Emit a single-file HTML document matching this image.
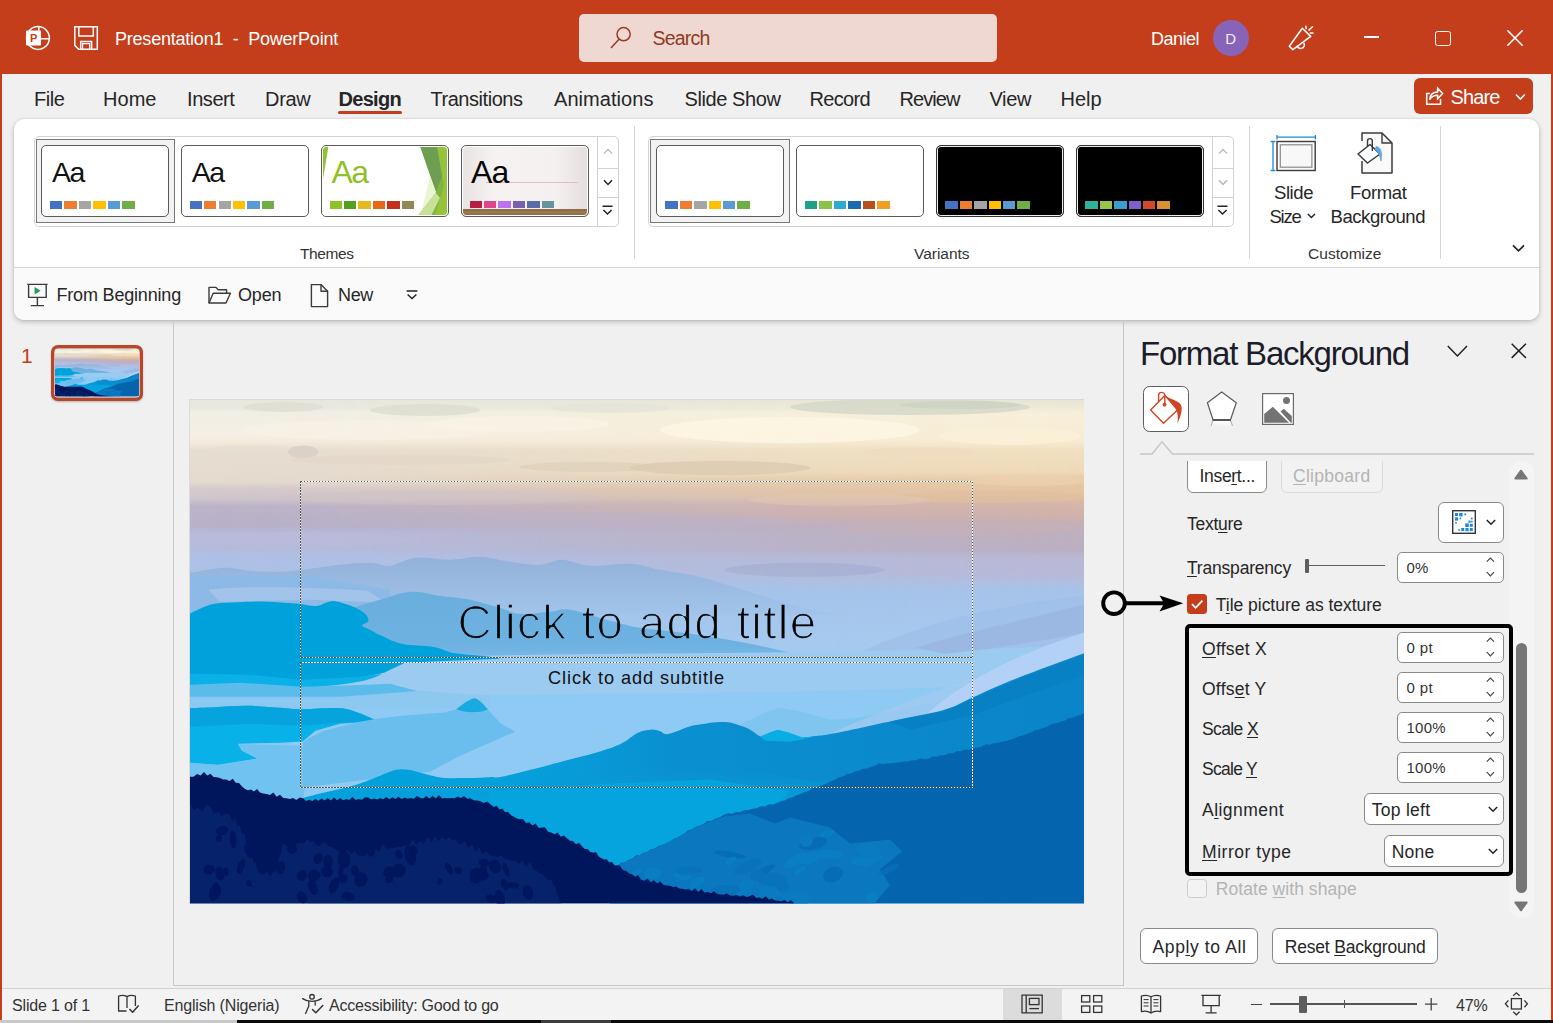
<!DOCTYPE html>
<html lang="en"><head><meta charset="utf-8"><title>Presentation1 - PowerPoint</title>
<style>
*{box-sizing:border-box;margin:0;padding:0}
html,body{width:1553px;height:1023px;overflow:hidden;background:#f0f0f0}
body{font-family:"Liberation Sans",sans-serif;color:#262626;position:relative}
#app{position:absolute;left:0;top:0;width:1553px;height:1023px;overflow:hidden;background:#f0f0f0}
.a{position:absolute}
.t{position:absolute;white-space:nowrap;line-height:1;color:#262626}
u{text-decoration:underline;text-underline-offset:2px;text-decoration-thickness:1px}
svg{position:absolute;overflow:visible}
.box{position:absolute;background:#fff;border:1px solid #8a8a8a;border-radius:5px}
.thumb{position:absolute;top:145px;width:128px;height:72px;border:1px solid #5a5a5a;border-radius:5px;background:#fff;overflow:hidden}
.sw{position:absolute;top:55.2px;height:7.5px;width:12.4px}
</style></head><body><div id="app">

<!-- ============ TITLE BAR ============ -->
<div class="a" id="titlebar" style="left:0;top:0;width:1553px;height:74px;background:#c43e1c"></div>
<div class="a" style="left:0;top:0;width:2px;height:1020px;background:#c43e1c"></div>
<div class="a" style="left:1551px;top:0;width:2px;height:1020px;background:#c43e1c"></div>

<svg style="left:24px;top:24px" width="28" height="28" viewBox="24 24 28 28" fill="none" stroke="#fff" stroke-width="1.5">
<circle cx="38" cy="38" r="11.4"></circle><path d="M38.8 26.5V31M41 38.8H49.5"></path>
<rect x="26" y="30.4" width="15" height="15" rx="1.2" fill="#fff" stroke="none"></rect>
</svg>
<span class="t" style="left:30px;top:33.29px;font-size:11px;color:#c43e1c;font-weight:bold">P</span>
<svg style="left:73px;top:25px" width="26" height="26" viewBox="73 25 26 26" fill="none" stroke="#fff" stroke-width="1.5">
<path d="M74.8 26.7H97.3V49.2H78.6L74.8 45.4Z"></path><path d="M78.8 26.7V36H93.3V26.7"></path><path d="M80.7 49.2V41.6H91.6V49.2"></path><path d="M82.6 49V43.6H89.7V49" stroke-width="1.2"></path>
</svg>
<span class="t" style="left: 115px; top: 29.76px; font-size: 18px; color: rgb(255, 255, 255); white-space: pre; letter-spacing: -0.219px;">Presentation1  -  PowerPoint</span>
<div class="a" style="left:579px;top:14px;width:418px;height:48px;background:#f0d8d2;border-radius:5px"></div>
<svg style="left:608px;top:24px" width="26" height="28" viewBox="608 24 26 28" fill="none" stroke="#9a3a22" stroke-width="1.5"><circle cx="623.6" cy="34.2" r="6.6"></circle><path d="M619 39.2L611 48"></path></svg>
<span class="t" style="left: 652.5px; top: 29.49px; font-size: 19.5px; color: rgb(143, 58, 36); letter-spacing: -0.799px;">Search</span>
<span class="t" style="left: 1151px; top: 29.76px; font-size: 18px; color: rgb(255, 255, 255); letter-spacing: -0.505px;">Daniel</span>
<div class="a" style="left:1213px;top:20px;width:36px;height:36px;border-radius:50%;background:#8764b8"></div>
<span class="t" style="left:1225.3px;top:30.80px;font-size:15px;color:#f3ecfb">D</span>
<svg style="left:1286px;top:24px" width="30" height="28" viewBox="1286 24 30 28" fill="none" stroke="#fff" stroke-width="1.5" stroke-linecap="round" stroke-linejoin="round">
<path d="M1289.3 46.2L1302.3 28.2L1310.7 36.4L1292.8 49.6Z"></path><path d="M1297.4 46.4a3.4 3.4 0 0 0 6.600-3"></path><path d="M1305.800 26.200l.4 2.400M1308.900 30.100l3.600-3.400M1310.400 32.900h2.600"></path>
</svg>
<div class="a" style="left:1364px;top:36px;width:15px;height:1.6px;background:#fff"></div>
<div class="a" style="left:1435px;top:30.5px;width:15.5px;height:15px;border:1.6px solid #fff;border-radius:2.5px"></div>
<svg style="left:1507px;top:30px" width="16" height="16" viewBox="0 0 16 16" stroke="#fff" stroke-width="1.6" stroke-linecap="round"><path d="M.8.8L15.2 15.2M15.2.8L.8 15.2"></path></svg>


<!-- ============ TABS ============ -->

<span class="t" style="left: 34px; top: 88.57px; font-size: 20px; letter-spacing: -0.434px;">File</span>
<span class="t" style="left: 103px; top: 88.57px; font-size: 20px; letter-spacing: 0.035px;">Home</span>
<span class="t" style="left: 187px; top: 88.57px; font-size: 20px; letter-spacing: -0.422px;">Insert</span>
<span class="t" style="left: 265px; top: 88.57px; font-size: 20px; letter-spacing: -0.293px;">Draw</span>
<span class="t" style="left: 338.5px; top: 88.57px; font-size: 20px; font-weight: bold; letter-spacing: -0.698px;">Design</span>
<div class="a" style="left:338px;top:110.5px;width:64px;height:3.2px;border-radius:2px;background:#c43e1c"></div>
<span class="t" style="left: 430.5px; top: 88.57px; font-size: 20px; letter-spacing: -0.462px;">Transitions</span>
<span class="t" style="left: 554px; top: 88.57px; font-size: 20px; letter-spacing: 0.056px;">Animations</span>
<span class="t" style="left: 684.5px; top: 88.57px; font-size: 20px; letter-spacing: -0.406px;">Slide Show</span>
<span class="t" style="left: 809.5px; top: 88.57px; font-size: 20px; letter-spacing: -0.664px;">Record</span>
<span class="t" style="left: 899.5px; top: 88.57px; font-size: 20px; letter-spacing: -0.93px;">Review</span>
<span class="t" style="left: 989.5px; top: 88.57px; font-size: 20px; letter-spacing: -0.375px;">View</span>
<span class="t" style="left: 1060.5px; top: 88.57px; font-size: 20px; letter-spacing: -0.035px;">Help</span>
<div class="a" style="left:1414px;top:78px;width:119px;height:36px;border-radius:6px;background:#c43e1c"></div>
<svg style="left:1425px;top:86px" width="20" height="20" viewBox="1425 86 20 20" fill="none" stroke="#fff" stroke-width="1.5" stroke-linejoin="miter">
<path d="M1430 93.5H1426.7V104.2H1440.5V99"></path><path d="M1429.6 99.5c.6-5 3.6-7.6 8-7.6V88.2l5 5.3-5 5.3v-3.6c-3.6 0-6 1.2-8 4.3Z"></path>
</svg>
<span class="t" style="left: 1450.5px; top: 86.87px; font-size: 20px; color: rgb(255, 255, 255); letter-spacing: -0.875px;">Share</span>
<svg style="left:1515px;top:93px" width="11" height="8" viewBox="0 0 11 8" fill="none" stroke="#fff" stroke-width="1.6"><path d="M1 1.5L5.4 6L9.8 1.5"></path></svg>


<!-- ============ RIBBON ============ -->
<div class="a" id="ribbon" style="left:14px;top:119px;width:1525.3px;height:200.7px;background:#fff;border-radius:10px;box-shadow:0 2px 5px rgba(0,0,0,.22),0 0 2px rgba(0,0,0,.12)"></div>
<div class="a" style="left:14px;top:267px;width:1525.3px;height:52.7px;background:#fafafa;border-top:1px solid #d6d6d6;border-radius:0 0 10px 10px"></div>
<div class="a" style="left:34px;top:136px;width:585px;height:91px;border:1px solid #d2d2d2;border-radius:5px"></div><div class="a" style="left:35.5px;top:139px;width:139.5px;height:84px;border:1px solid #777;background:#f2f2f2"></div><div class="a" style="left:596.5px;top:137px;width:1px;height:89px;background:#d2d2d2"></div><div class="a" style="left:596.5px;top:167.5px;width:22px;height:1px;background:#d2d2d2"></div><div class="a" style="left:596.5px;top:196.8px;width:22px;height:1px;background:#d2d2d2"></div><svg style="left:602.6px;top:148px" width="10" height="7" viewBox="0 0 10 7" fill="none" stroke="#b5b5b5" stroke-width="1.3"><path d="M1 5.6L5 1.4L9 5.6"></path></svg><svg style="left:602.6px;top:179px" width="10" height="7" viewBox="0 0 10 7" fill="none" stroke="#222" stroke-width="1.5"><path d="M1 1.2L5 5.4L9 1.2"></path></svg><svg style="left:602.1px;top:205px" width="11" height="11" viewBox="0 0 11 11" fill="none" stroke="#222" stroke-width="1.5"><path d="M.5 1.2H10.5M1.4 5L5.5 9L9.6 5"></path></svg><div class="thumb" style="left:41px"><i class="sw" style="left:8.0px;top:55.2px;background:#4472c4"></i><i class="sw" style="left:22.4px;top:55.2px;background:#ed7d31"></i><i class="sw" style="left:36.9px;top:55.2px;background:#a5a5a5"></i><i class="sw" style="left:51.3px;top:55.2px;background:#ffc000"></i><i class="sw" style="left:65.8px;top:55.2px;background:#5b9bd5"></i><i class="sw" style="left:80.2px;top:55.2px;background:#70ad47"></i></div><span class="t" style="left: 52px; top: 158.37px; font-size: 28.5px; color: rgb(17, 17, 17); letter-spacing: -1.438px;">Aa</span><div class="thumb" style="left:180.7px"><i class="sw" style="left:8.0px;top:55.2px;background:#4472c4"></i><i class="sw" style="left:22.4px;top:55.2px;background:#ed7d31"></i><i class="sw" style="left:36.9px;top:55.2px;background:#a5a5a5"></i><i class="sw" style="left:51.3px;top:55.2px;background:#ffc000"></i><i class="sw" style="left:65.8px;top:55.2px;background:#5b9bd5"></i><i class="sw" style="left:80.2px;top:55.2px;background:#70ad47"></i></div><span class="t" style="left: 191.8px; top: 158.37px; font-size: 28.5px; color: rgb(17, 17, 17); letter-spacing: -1.438px;">Aa</span><div class="thumb" style="left:320.5px"><i class="sw" style="left:8.0px;top:55.2px;background:#90c226"></i><i class="sw" style="left:22.4px;top:55.2px;background:#54a021"></i><i class="sw" style="left:36.9px;top:55.2px;background:#e6b91e"></i><i class="sw" style="left:51.3px;top:55.2px;background:#e76618"></i><i class="sw" style="left:65.8px;top:55.2px;background:#c42f1a"></i><i class="sw" style="left:80.2px;top:55.2px;background:#918655"></i>
<svg style="left:0;top:0" width="128" height="72" viewBox="0 0 128 72">
<path d="M0 0H6.5L1 33L0 36Z" fill="#8fc231"></path>
<path d="M98 0H127V72H94L114 46Z" fill="#7fb540"></path>
<path d="M98 0H115L120 30L114 46Z" fill="#6e9e52"></path>
<path d="M115 0H127V72H112L122 40Z" fill="#93c43a"></path>
<path d="M105 36L114 46L94 72H108L118 52Z" fill="#cfe6a0" opacity=".9"></path>
<path d="M108 30L114 46L100 64Z" fill="#e4f2c8" opacity=".8"></path>
</svg><div class="a" style="left:0;top:0;width:126px;height:70px;border:1px solid #fff;border-radius:4px"></div></div><span class="t" style="left: 331.5px; top: 155.91px; font-size: 32px; color: rgb(143, 193, 38); letter-spacing: -1.57px;">Aa</span><div class="thumb" style="left:460.6px;background:linear-gradient(90deg,#e9e3e2,#f5f2f1 25%,#f3f0ef 75%,#e4dedd)"><i class="sw" style="left:8.0px;top:54.8px;background:#b71e42"></i><i class="sw" style="left:22.4px;top:54.8px;background:#de478e"></i><i class="sw" style="left:36.9px;top:54.8px;background:#bc72f0"></i><i class="sw" style="left:51.3px;top:54.8px;background:#795faf"></i><i class="sw" style="left:65.8px;top:54.8px;background:#586ea6"></i><i class="sw" style="left:80.2px;top:54.8px;background:#6892a0"></i>
<div class="a" style="left:24px;top:35.7px;width:92px;height:1.4px;background:#eab8c8"></div>
<div class="a" style="left:0;top:63.2px;width:128px;height:9px;background:linear-gradient(#8a6a42,#9c7a50 40%,#7a5a38)"></div><div class="a" style="left:0;top:0;width:126px;height:70px;border:1px solid #fff;border-radius:4px"></div></div><span class="t" style="left: 471px; top: 155.91px; font-size: 32px; color: rgb(10, 10, 10); letter-spacing: -0.82px;">Aa</span><span class="t" style="left: 300px; top: 245.68px; font-size: 15.5px; color: rgb(51, 51, 51); letter-spacing: -0.417px;">Themes</span><div class="a" style="left:633.9px;top:126px;width:1px;height:133px;background:#d4d4d4"></div><div class="a" style="left:648.4px;top:136px;width:585.6px;height:91px;border:1px solid #d2d2d2;border-radius:5px"></div><div class="a" style="left:650px;top:139px;width:139.5px;height:84px;border:1px solid #777;background:#f2f2f2"></div><div class="a" style="left:1211.5px;top:137px;width:1px;height:89px;background:#d2d2d2"></div><div class="a" style="left:1211.5px;top:167.5px;width:22px;height:1px;background:#d2d2d2"></div><div class="a" style="left:1211.5px;top:196.8px;width:22px;height:1px;background:#d2d2d2"></div><svg style="left:1217.6px;top:148px" width="10" height="7" viewBox="0 0 10 7" fill="none" stroke="#b5b5b5" stroke-width="1.3"><path d="M1 5.6L5 1.4L9 5.6"></path></svg><svg style="left:1217.6px;top:179px" width="10" height="7" viewBox="0 0 10 7" fill="none" stroke="#b5b5b5" stroke-width="1.5"><path d="M1 1.2L5 5.4L9 1.2"></path></svg><svg style="left:1217.1px;top:205px" width="11" height="11" viewBox="0 0 11 11" fill="none" stroke="#222" stroke-width="1.5"><path d="M.5 1.2H10.5M1.4 5L5.5 9L9.6 5"></path></svg><div class="thumb" style="left:656.3px"><i class="sw" style="left:8.0px;top:55.2px;background:#4472c4"></i><i class="sw" style="left:22.4px;top:55.2px;background:#ed7d31"></i><i class="sw" style="left:36.9px;top:55.2px;background:#a5a5a5"></i><i class="sw" style="left:51.3px;top:55.2px;background:#ffc000"></i><i class="sw" style="left:65.8px;top:55.2px;background:#5b9bd5"></i><i class="sw" style="left:80.2px;top:55.2px;background:#70ad47"></i></div><div class="thumb" style="left:796px"><i class="sw" style="left:8.0px;top:55.2px;background:#1f9e8a"></i><i class="sw" style="left:22.4px;top:55.2px;background:#8cc24a"></i><i class="sw" style="left:36.9px;top:55.2px;background:#2eaad0"></i><i class="sw" style="left:51.3px;top:55.2px;background:#1a6ab0"></i><i class="sw" style="left:65.8px;top:55.2px;background:#b8501e"></i><i class="sw" style="left:80.2px;top:55.2px;background:#f0a020"></i></div><div class="thumb" style="left:936.3px;background:#000;border-color:#333;box-shadow:inset 0 0 0 1px #eee"><i class="sw" style="left:8.0px;top:55.2px;background:#4472c4"></i><i class="sw" style="left:22.4px;top:55.2px;background:#ed7d31"></i><i class="sw" style="left:36.9px;top:55.2px;background:#a5a5a5"></i><i class="sw" style="left:51.3px;top:55.2px;background:#ffc000"></i><i class="sw" style="left:65.8px;top:55.2px;background:#5b9bd5"></i><i class="sw" style="left:80.2px;top:55.2px;background:#70ad47"></i></div><div class="thumb" style="left:1076.3px;background:#000;border-color:#333;box-shadow:inset 0 0 0 1px #eee"><i class="sw" style="left:8.0px;top:55.2px;background:#2eb398"></i><i class="sw" style="left:22.4px;top:55.2px;background:#9bc34a"></i><i class="sw" style="left:36.9px;top:55.2px;background:#3a9fd0"></i><i class="sw" style="left:51.3px;top:55.2px;background:#7f5fc8"></i><i class="sw" style="left:65.8px;top:55.2px;background:#cf4a2a"></i><i class="sw" style="left:80.2px;top:55.2px;background:#d89030"></i></div><span class="t" style="left: 914px; top: 245.68px; font-size: 15.5px; color: rgb(51, 51, 51); letter-spacing: -0.027px;">Variants</span><div class="a" style="left:1249px;top:126px;width:1px;height:133px;background:#d4d4d4"></div><div class="a" style="left:1440px;top:126px;width:1px;height:133px;background:#d4d4d4"></div><svg style="left:1268px;top:132px" width="50" height="42" viewBox="1268 132 50 42" fill="none">
<path d="M1277 137.2H1315.4M1277 135V139.4M1315.4 135V139.4" stroke="#1e8ad6" stroke-width="1.3"></path>
<path d="M1273 141.5V170.5M1270.6 141.5H1275.4M1270.6 170.5H1275.4" stroke="#1e8ad6" stroke-width="1.3"></path>
<rect x="1277" y="141.5" width="38.2" height="29" fill="#fafafa" stroke="#3b3b3b" stroke-width="1.4"></rect>
<rect x="1280.3" y="144.8" width="31.6" height="22.4" fill="#f8f8f8" stroke="#8a8a8a" stroke-width="1.2"></rect>
</svg>
<span class="t" style="left: 1274px; top: 184.34px; font-size: 18.5px; letter-spacing: -0.428px;">Slide</span>
<span class="t" style="left: 1269.5px; top: 207.94px; font-size: 18.5px; letter-spacing: -1.25px;">Size</span>
<svg style="left:1306.5px;top:213px" width="9" height="6" viewBox="0 0 9 6" fill="none" stroke="#222" stroke-width="1.4"><path d="M.8 1L4.4 4.6L8 1"></path></svg>
<svg style="left:1355px;top:130px" width="40" height="46" viewBox="1355 130 40 46" fill="none" stroke-linejoin="round">
<path d="M1362 141V133H1382L1392 143V173H1362V161" stroke="#3b3b3b" stroke-width="1.5" fill="#fafafa"></path>
<path d="M1382 133V143H1392" stroke="#3b3b3b" stroke-width="1.4"></path>
<path d="M1358 154L1370 144.5L1380 154L1367.5 163Z" stroke="#3b3b3b" stroke-width="1.5" fill="#fff"></path>
<path d="M1367.5 147V141a2.4 2.4 0 0 1 4.8 0V151" stroke="#3b3b3b" stroke-width="1.4"></path>
<path d="M1376 146.5c4.6.4 6.6 5.6 5 14.5c-1-5.6-2.4-9.4-5.6-11Z" fill="#5ba7e6" stroke="#5ba7e6" stroke-width=".8"></path>
</svg>
<span class="t" style="left: 1350px; top: 184.34px; font-size: 18.5px; letter-spacing: -0.349px;">Format</span>
<span class="t" style="left: 1330.5px; top: 207.94px; font-size: 18.5px; letter-spacing: -0.423px;">Background</span>
<span class="t" style="left: 1308px; top: 245.88px; font-size: 15.5px; color: rgb(51, 51, 51); letter-spacing: 0.031px;">Customize</span>
<svg style="left:1511.5px;top:243.5px" width="13" height="9" viewBox="0 0 13 9" fill="none" stroke="#222" stroke-width="1.7"><path d="M1 1.3L6.5 6.8L12 1.3"></path></svg>
<svg style="left:24px;top:282px" width="26" height="26" viewBox="24 282 26 26" fill="none" stroke="#3b3b3b" stroke-width="1.4">
<path d="M27.2 284.4H47.6M28.6 284.4V297.4H46.2V284.4M37.4 297.4V305.6M30.8 305.6H44"></path>
<path d="M34.6 287L40.6 290.7L34.6 294.4Z" fill="#1e9e55" stroke="none"></path></svg>
<span class="t" style="left: 56.5px; top: 285.96px; font-size: 18px; letter-spacing: -0.184px;">From Beginning</span>
<svg style="left:206px;top:284px" width="26" height="22" viewBox="206 284 26 22" fill="none" stroke="#3b3b3b" stroke-width="1.4" stroke-linejoin="round">
<path d="M209 303V287.4H216L218.2 289.8H226.6V293.2"></path><path d="M209 303L213.2 293.2H230.4L226 303Z"></path></svg>
<span class="t" style="left: 238px; top: 285.96px; font-size: 18px; letter-spacing: -0.137px;">Open</span>
<svg style="left:308px;top:282px" width="22" height="28" viewBox="308 282 22 28" fill="none" stroke="#3b3b3b" stroke-width="1.4" stroke-linejoin="round">
<path d="M311.4 284.6H321L327.6 291.2V306.6H311.4Z"></path><path d="M321 284.6V291.2H327.6"></path></svg>
<span class="t" style="left: 338px; top: 285.96px; font-size: 18px; letter-spacing: -0.339px;">New</span>
<svg style="left:405.5px;top:290px" width="12" height="10" viewBox="0 0 12 10" fill="none" stroke="#222" stroke-width="1.4"><path d="M.6 1H11.4M1.6 4.6L6 8.6L10.4 4.6"></path></svg>


<!-- ============ MAIN ============ -->
<!--MAIN0-->
<svg width="0" height="0" style="left:0;top:0"><filter id="thin" x="-2%" y="-10%" width="104%" height="120%"><feMorphology operator="erode" radius="1"></feMorphology></filter><symbol id="pic" viewBox="0 0 894 504" preserveAspectRatio="none">
<defs>
<linearGradient id="skyL" x1="0" y1="0" x2="0" y2="1"><stop offset="0.0000" stop-color="#e8e8e0"></stop><stop offset="0.0159" stop-color="#e9e9e0"></stop><stop offset="0.0238" stop-color="#f1eee4"></stop><stop offset="0.0694" stop-color="#f4f0e6"></stop><stop offset="0.0833" stop-color="#f5ebdd"></stop><stop offset="0.0992" stop-color="#e7ded2"></stop><stop offset="0.1627" stop-color="#e4dace"></stop><stop offset="0.1766" stop-color="#d5cacc"></stop><stop offset="0.1964" stop-color="#d0c5cb"></stop><stop offset="0.2103" stop-color="#bcb4c9"></stop><stop offset="0.2500" stop-color="#b8b1c9"></stop><stop offset="0.2639" stop-color="#b6badb"></stop><stop offset="0.2956" stop-color="#b4bcde"></stop><stop offset="0.3095" stop-color="#afc0e5"></stop><stop offset="0.3413" stop-color="#adc1e6"></stop><stop offset="0.3690" stop-color="#a3c4ea"></stop><stop offset="0.5000" stop-color="#9ac8f0"></stop><stop offset="0.7500" stop-color="#86c8f2"></stop><stop offset="1.0000" stop-color="#86c8f2"></stop></linearGradient>
<linearGradient id="skyR" x1="0" y1="0" x2="0" y2="1"><stop offset="0.0000" stop-color="#e6e5d3"></stop><stop offset="0.0159" stop-color="#efead8"></stop><stop offset="0.0278" stop-color="#f8efd8"></stop><stop offset="0.0794" stop-color="#f7ecd2"></stop><stop offset="0.0992" stop-color="#f1e0c0"></stop><stop offset="0.1429" stop-color="#eed9b6"></stop><stop offset="0.1587" stop-color="#e6c8a2"></stop><stop offset="0.1885" stop-color="#e4c29e"></stop><stop offset="0.2024" stop-color="#d8b7a6"></stop><stop offset="0.2341" stop-color="#ceb0ac"></stop><stop offset="0.2500" stop-color="#bfb0bc"></stop><stop offset="0.2976" stop-color="#bbafc2"></stop><stop offset="0.3135" stop-color="#b8b7d4"></stop><stop offset="0.3452" stop-color="#b8b9d8"></stop><stop offset="0.3611" stop-color="#b0bee0"></stop><stop offset="0.3810" stop-color="#a6c3ea"></stop><stop offset="0.4802" stop-color="#a9c9ee"></stop><stop offset="0.5952" stop-color="#9ccbf2"></stop><stop offset="1.0000" stop-color="#86c8f2"></stop></linearGradient>
<linearGradient id="mh" x1="0" y1="0" x2="1" y2="0"><stop offset="0" stop-color="#000"></stop><stop offset=".15" stop-color="#0a0a0a"></stop><stop offset=".45" stop-color="#707070"></stop><stop offset=".7" stop-color="#c4c4c4"></stop><stop offset="1" stop-color="#fff"></stop></linearGradient>
<mask id="mk"><rect width="894" height="504" fill="url(#mh)"></rect></mask>
<linearGradient id="far" x1="0" y1="0" x2="0" y2="1"><stop offset="0" stop-color="#93b1d9"></stop><stop offset="1" stop-color="#a2c4ea"></stop></linearGradient>
<linearGradient id="mid" x1="0" y1="0" x2="0" y2="1"><stop offset="0" stop-color="#6aaede"></stop><stop offset=".55" stop-color="#6eb2e2"></stop><stop offset="1" stop-color="#8fc8f2"></stop></linearGradient>
<linearGradient id="rdg" x1="0" y1="0" x2="1" y2="0"><stop offset="0" stop-color="#02a2dc"></stop><stop offset=".3" stop-color="#05a0db"></stop><stop offset=".48" stop-color="#0a90d1"></stop><stop offset="1" stop-color="#0a84c8"></stop></linearGradient>
<linearGradient id="val" x1="0" y1="0" x2="0" y2="1"><stop offset="0" stop-color="#0b92d3" stop-opacity="0"></stop><stop offset=".4" stop-color="#06a4de"></stop><stop offset="1" stop-color="#07a6e0"></stop></linearGradient>
<linearGradient id="cy" x1="0" y1="0" x2="1" y2="0"><stop offset="0" stop-color="#00a2dc"></stop><stop offset=".7" stop-color="#05a5de"></stop><stop offset="1" stop-color="#2fb0e6"></stop></linearGradient>
</defs>
<rect width="894" height="504" fill="url(#skyL)"></rect>
<rect width="894" height="504" fill="url(#skyR)" mask="url(#mk)"></rect>
<ellipse cx="93" cy="7" rx="40" ry="5" fill="#deddd2" opacity="0.8"></ellipse>
<ellipse cx="235" cy="10" rx="55" ry="6" fill="#dcdcd0" opacity="0.8"></ellipse>
<ellipse cx="420" cy="8" rx="60" ry="5" fill="#e4e3d8" opacity="0.7"></ellipse>
<ellipse cx="720" cy="7" rx="120" ry="8" fill="#d6d9c9" opacity="0.9"></ellipse>
<ellipse cx="770" cy="5" rx="60" ry="4" fill="#cdd2c2" opacity="0.8"></ellipse>
<ellipse cx="180" cy="30" rx="130" ry="10" fill="#f8f2e6" opacity="0.7"></ellipse>
<ellipse cx="330" cy="24" rx="90" ry="8" fill="#faf4e6" opacity="0.7"></ellipse>
<ellipse cx="600" cy="30" rx="130" ry="13" fill="#fdf6e3" opacity="0.8"></ellipse>
<ellipse cx="820" cy="36" rx="70" ry="9" fill="#fbf1da" opacity="0.7"></ellipse>
<ellipse cx="113" cy="52" rx="15" ry="6.5" fill="#d8d0c8" opacity="0.9"></ellipse>
<ellipse cx="60" cy="50" rx="40" ry="5" fill="#e6dfd4" opacity="0.6"></ellipse>
<ellipse cx="210" cy="60" rx="110" ry="5" fill="#e3d6c8" opacity="0.7"></ellipse>
<ellipse cx="400" cy="67" rx="70" ry="5" fill="#dccdb8" opacity="0.6"></ellipse>
<ellipse cx="530" cy="68" rx="90" ry="7" fill="#dccbb2" opacity="0.8"></ellipse>
<ellipse cx="730" cy="52" rx="55" ry="5" fill="#efdcc0" opacity="0.7"></ellipse>
<ellipse cx="840" cy="81" rx="60" ry="5" fill="#ecd2ac" opacity="0.7"></ellipse>
<ellipse cx="800" cy="97" rx="95" ry="6" fill="#e0bfa0" opacity="0.7"></ellipse>
<ellipse cx="650" cy="100" rx="90" ry="6" fill="#e2c8b4" opacity="0.5"></ellipse>
<ellipse cx="250" cy="98" rx="160" ry="7" fill="#cfc2c8" opacity="0.5"></ellipse>
<ellipse cx="380" cy="122" rx="230" ry="9" fill="#bcb2c8" opacity="0.55"></ellipse>
<ellipse cx="770" cy="128" rx="120" ry="8" fill="#c8afb4" opacity="0.5"></ellipse>
<ellipse cx="615" cy="170" rx="80" ry="7" fill="#a6b0d2" opacity="0.8"></ellipse>
<ellipse cx="100" cy="140" rx="120" ry="8" fill="#bcbcda" opacity="0.5"></ellipse>
<path d="M0.0,173.0 C6.3,172.1 24.2,168.4 35.0,168.0 C45.8,167.6 50.1,170.3 60.0,171.0 C69.9,171.7 80.5,172.2 90.0,172.0 C99.5,171.8 102.2,171.3 113.0,170.0 C123.8,168.7 137.9,166.3 150.0,165.0 C162.1,163.7 171.0,162.8 180.0,163.0 C189.0,163.2 191.7,166.9 200.0,166.0 C208.3,165.1 215.2,159.1 226.0,158.0 C236.8,156.9 248.5,160.2 260.0,160.0 C271.5,159.8 279.2,156.6 290.0,157.0 C300.8,157.4 309.2,160.6 320.0,162.0 C330.8,163.4 340.6,165.4 350.0,165.0 C359.4,164.6 363.0,159.8 372.0,160.0 C381.0,160.2 387.8,165.3 400.0,166.0 C412.2,166.7 427.4,163.3 440.0,164.0 C452.6,164.7 458.3,167.8 470.0,170.0 C481.7,172.2 492.4,173.1 505.0,176.0 C517.6,178.9 527.4,182.2 540.0,186.0 C552.6,189.8 562.4,193.2 575.0,197.0 C587.6,200.8 596.5,203.8 610.0,207.0 C623.5,210.2 642.8,213.6 650.0,215.0 L0.0,215.0 Z" fill="url(#far)"></path>
<path d="M0,176 L120,176 L200,190 L200,215 L0,215 Z" fill="#8db9e6"></path>
<path d="M18,190 C50,186 120,187 178,191 L196,203 L120,200 L30,202 Z" fill="#a2c4ea"></path>
<path d="M650,262 C720,226 800,206 894,196 L894,262 Z" fill="#9fbfe8" opacity=".8"></path>
<path d="M150.0,212.0 C152.9,211.1 158.8,209.2 166.0,207.0 C173.2,204.8 180.1,202.7 190.0,200.0 C199.9,197.3 210.2,192.7 221.0,192.0 C231.8,191.3 239.4,194.6 250.0,196.0 C260.6,197.4 269.2,197.8 280.0,200.0 C290.8,202.2 301.0,205.5 310.0,208.0 C319.0,210.5 321.0,213.3 330.0,214.0 C339.0,214.7 351.0,212.7 360.0,212.0 C369.0,211.3 369.2,208.4 380.0,210.0 C390.8,211.6 407.4,217.8 420.0,221.0 C432.6,224.2 435.6,225.7 450.0,228.0 C464.4,230.3 480.2,231.1 500.0,234.0 C519.8,236.9 538.4,239.7 560.0,244.0 C581.6,248.3 602.0,253.3 620.0,258.0 C638.0,262.7 652.8,267.8 660.0,270.0 L660.0,290.0 L150.0,290.0 Z" fill="url(#mid)"></path>
<path d="M170,262 C300,250 520,258 894,246 L894,400 L100,400 L100,290 Z" fill="#9ccbf2"></path>
<path d="M100,300 C300,290 600,300 894,280 L894,400 L100,400 Z" fill="#8ecaf3"></path>
<path d="M540,330 L575,313 L590,308 L612,312 L640,320 L669,318 L720,308 L780,296 L780,340 L540,345 Z" fill="#80c4f0"></path>
<path d="M640,334 C720,298 830,262 894,240 L894,300 L640,346 Z" fill="#a4cbf0" opacity=".7"></path>
<path d="M725,248 L760,238 L785,231.5 L829,220.7 L894,204.6 L894,233 L850,241 L800,249 L755,254 Z" fill="#9bb8e2"></path>
<path d="M738,313 C770,285 820,256 894,233 L894,300 L738,332 Z" fill="#b3d1f6"></path>
<path d="M0.0,214.0 C1.8,213.1 5.6,210.8 10.0,209.0 C14.4,207.2 17.7,205.2 24.5,204.0 C31.3,202.8 39.5,202.9 48.0,202.5 C56.5,202.1 63.5,201.5 72.0,201.6 C80.5,201.7 88.5,202.6 95.0,203.0 C101.5,203.4 102.5,203.4 108.0,204.0 C113.5,204.6 120.5,206.5 125.5,206.3 C130.5,206.1 132.5,203.9 136.0,203.0 C139.5,202.1 141.0,201.0 145.0,201.4 C149.0,201.8 153.8,203.5 158.0,205.0 C162.2,206.5 165.3,207.7 168.5,209.5 C171.7,211.3 174.3,212.9 176.0,215.0 C177.7,217.1 178.9,219.5 178.2,221.4 C177.5,223.3 171.7,224.2 172.0,225.7 C172.3,227.2 176.8,228.3 180.0,230.0 C183.2,231.7 184.3,232.8 190.0,235.3 C195.7,237.8 201.8,241.9 211.5,244.0 C221.2,246.1 234.1,245.5 243.8,247.2 C253.5,248.9 255.6,251.9 265.3,253.6 C275.0,255.3 289.6,255.8 297.6,256.8 C305.6,257.8 307.8,258.6 310.0,259.0 L260.0,261.0 L215.0,263.0 L194.0,273.0 L170.0,278.0 L112.0,281.6 L60.0,276.0 L0.0,276.0 Z" fill="#00a2dc"></path>
<path d="M0,274 L60,275 L112,280 L170,277 L192,274 C180,282 150,286 112,288 L50,284 L0,286 Z" fill="#0ab0e6"></path>
<path d="M0,285 L50,283 L112,287 L150,286 L200,284 L230,292 L150,298 L0,298 Z" fill="#5bbcec"></path>
<path d="M0,297 L150,297 L230,291 L300,296 L300,308 L0,309 Z" fill="#8cc8f0" opacity=".9"></path>
<path d="M0.0,308.5 C4.5,308.3 14.7,307.9 25.0,307.5 C35.3,307.1 45.3,305.9 57.0,306.0 C68.7,306.1 80.1,307.4 90.0,308.0 C99.9,308.6 101.2,309.4 112.0,309.5 C122.8,309.6 139.9,307.9 150.0,308.5 C160.1,309.1 161.6,310.9 168.0,313.0 C174.4,315.1 182.5,319.0 185.7,320.3 L176.0,322.0 L150.0,324.0 L125.5,331.0 L112.6,341.8 L90.0,343.0 L48.0,344.0 L52.0,351.0 L67.5,359.0 L28.8,365.4 L0.0,363.5 Z" fill="#08b2e8"></path>
<path d="M0.0,308.5 C4.5,308.3 14.7,307.9 25.0,307.5 C35.3,307.1 45.3,305.9 57.0,306.0 C68.7,306.1 80.1,307.4 90.0,308.0 C99.9,308.6 101.2,309.4 112.0,309.5 C122.8,309.6 139.9,307.9 150.0,308.5 C160.1,309.1 161.6,310.9 168.0,313.0 C174.4,315.1 182.5,319.0 185.7,320.3 L176.0,322.0 L150.0,323.0 L110.0,326.0 L60.0,324.0 L0.0,327.0 Z" fill="#06a4de"></path>
<path d="M0,363 L28,365 L67,359 L52,351 L48,344.5 L112,346 L118,360 L113,402 L0,380 Z" fill="#70c3f0"></path>
<path d="M113,343 L117,339.6 L134,331 L168.5,322.4 L185.7,319.2 L211.6,316 L254.6,312.8 L266,309.5 L284.7,298.8 L297.6,309.5 L310.5,323.5 L325,332 L300,343 L270,356 L240,372 L113,388 Z" fill="#69beee"></path>
<path d="M266.4,309.5 C272,305 279,299.5 284.7,298.6 C290,300 294,305.5 297.8,309.6 C292,313 276,314 266.4,309.5 Z" fill="#1aa9e1"></path>
<path d="M100.0,402.0 C105.4,400.6 119.2,396.7 130.0,394.0 C140.8,391.3 150.1,389.9 160.0,387.0 C169.9,384.1 177.8,380.7 185.0,378.0 C192.2,375.3 195.2,373.5 200.0,372.0 C204.8,370.5 207.1,369.8 211.6,369.7 C216.1,369.6 219.9,370.5 225.0,371.5 C230.1,372.5 234.7,374.3 240.0,375.5 C245.3,376.7 248.3,377.8 254.6,378.3 C260.9,378.8 266.8,378.6 275.0,378.5 C283.2,378.4 293.6,377.7 300.0,377.5 C306.4,377.3 302.8,378.7 310.5,377.3 C318.2,375.9 331.2,372.6 342.8,369.7 C354.4,366.8 363.4,364.1 375.0,361.0 C386.6,357.9 397.2,355.6 407.3,352.5 C417.4,349.4 423.7,347.5 431.0,344.0 C438.3,340.5 442.6,335.5 448.0,333.0 C453.4,330.5 457.0,330.3 461.0,330.0 C465.0,329.7 466.9,330.7 470.0,331.5 C473.1,332.3 472.9,335.2 478.2,334.3 C483.5,333.4 493.1,328.6 499.7,326.7 C506.3,324.8 509.6,324.8 515.0,324.0 C520.4,323.2 524.9,322.5 529.9,322.4 C534.9,322.3 537.8,322.3 542.8,323.5 C547.8,324.7 552.0,326.2 557.8,328.9 C563.6,331.6 567.4,336.6 575.0,338.6 C582.6,340.6 591.9,340.3 600.0,340.0 C608.1,339.7 612.0,338.2 620.0,337.0 C628.0,335.8 628.3,336.8 644.5,333.6 C660.7,330.5 689.9,323.8 710.0,319.5 C730.1,315.2 742.9,313.5 756.0,309.5 C769.1,305.5 770.2,303.1 783.0,297.5 C795.8,291.9 807.0,286.4 827.0,278.5 C847.0,270.6 881.9,258.0 894.0,253.5 L894.0,504.0 L118.0,504.0 Z" fill="url(#rdg)"></path>
<path d="M570,337 L580,332.5 L588,330 L598,332.5 L612,337.5 L625,337 L600,342 L575,341 Z" fill="#0aade3"></path>
<path d="M700,322 L756,311 L783,299 L827,280 L894,256 L894,275 L830,298 L780,316 L720,330 Z" fill="#0880c4"></path>
<path d="M118,399 L190,388 L260,394 L330,388 L400,376 L470,362 L540,366 L600,378 L640,384 L622,392 L586,406 L534,418 L505,430 L446,459 L446,482 L300,420 L118,420 Z" fill="url(#val)"></path>
<path d="M300,392 L420,384 L520,380 L600,392 L586,406 L534,418 L505,430 L446,459 L446,482 L405,456 L376,440 L333,422 L300,406 Z" fill="#06a4de"></path>
<path d="M894.0,313.5 L890.2,315.3 L886.4,316.4 L882.7,318.0 L878.9,318.3 L875.1,320.7 L871.3,321.9 L867.6,323.3 L863.8,323.8 L860.0,325.4 L856.1,327.4 L852.2,328.7 L848.3,330.2 L844.4,330.8 L840.5,333.0 L836.6,334.3 L832.7,335.8 L828.8,336.5 L824.9,338.6 L821.0,339.9 L816.8,341.0 L812.6,341.9 L808.3,343.0 L804.1,343.3 L799.9,345.0 L795.7,344.7 L791.4,347.0 L787.2,347.8 L783.0,348.6 L779.0,349.9 L775.0,349.8 L771.0,351.7 L767.0,351.1 L763.0,353.5 L759.0,353.5 L755.0,355.4 L751.0,355.6 L747.0,357.2 L743.0,356.5 L739.0,358.9 L734.8,359.5 L730.7,358.6 L726.5,360.5 L722.3,360.5 L718.2,361.5 L714.0,361.8 L709.8,362.5 L705.7,362.8 L701.5,363.5 L697.3,363.5 L693.2,364.5 L689.0,363.7 L685.0,366.2 L681.0,367.2 L677.0,368.8 L673.0,369.1 L669.0,371.2 L665.0,371.5 L661.0,373.8 L657.0,374.4 L653.1,376.7 L649.2,377.5 L645.3,380.0 L641.4,381.6 L637.6,383.3 L633.7,384.9 L629.8,386.7 L625.9,388.0 L622.0,388.9 L618.1,391.6 L614.2,392.4 L610.3,394.7 L606.4,395.7 L602.6,397.8 L598.7,398.4 L594.8,400.9 L590.9,401.7 L587.0,403.5 L582.9,404.9 L578.8,404.6 L574.8,406.8 L570.7,406.6 L566.6,408.6 L562.5,409.1 L558.5,410.5 L554.4,410.5 L550.3,412.3 L546.2,412.4 L542.2,414.2 L538.1,413.7 L534.0,414.8 L529.9,417.7 L525.7,419.0 L521.6,421.1 L517.4,421.3 L513.3,424.6 L509.1,426.1 L505.0,427.3 L501.5,430.0 L498.0,430.8 L494.5,434.0 L491.0,435.8 L487.5,438.0 L484.0,439.2 L480.2,441.8 L476.3,443.6 L472.5,445.5 L468.7,446.3 L464.8,449.2 L461.0,449.8 L457.2,452.5 L453.5,453.1 L449.8,455.5 L446.0,455.6 L442.3,458.9 L438.6,460.2 L434.9,462.6 L431.1,463.3 L427.4,466.3 L423.7,467.2 L420.0,470.0 L420.0,504.0 L894.0,504.0 Z" fill="#0465ae"></path>
<path d="M420,470 L446,457 L484,440 L505,428 L534,417 L560,414 L585,424 L600,418 L640,428 L660,444 L700,440 L712,452 L690,470 L700,486 L684,504 L420,504 Z" fill="#0a77be"></path>
<g opacity=".75"><ellipse cx="558" cy="467" rx="15.2" ry="5.3" fill="#0870b8" transform="rotate(-27 558 467)"></ellipse><ellipse cx="573" cy="472" rx="13.7" ry="3.5" fill="#0669b2" transform="rotate(-29 573 472)"></ellipse><ellipse cx="580" cy="492" rx="12.0" ry="6.0" fill="#0b7cc2" transform="rotate(8 580 492)"></ellipse><ellipse cx="610" cy="471" rx="6.7" ry="3.1" fill="#0b80c6" transform="rotate(-32 610 471)"></ellipse><ellipse cx="555" cy="488" rx="10.7" ry="6.2" fill="#0b7cc2" transform="rotate(-35 555 488)"></ellipse><ellipse cx="462" cy="474" rx="9.5" ry="5.8" fill="#0b80c6" transform="rotate(-3 462 474)"></ellipse><ellipse cx="639" cy="455" rx="14.3" ry="4.9" fill="#0b80c6" transform="rotate(3 639 455)"></ellipse><ellipse cx="677" cy="460" rx="15.8" ry="5.0" fill="#0b80c6" transform="rotate(-10 677 460)"></ellipse><ellipse cx="492" cy="476" rx="8.7" ry="4.6" fill="#0b80c6" transform="rotate(8 492 476)"></ellipse><ellipse cx="637" cy="434" rx="7.7" ry="3.5" fill="#0b80c6" transform="rotate(-14 637 434)"></ellipse><ellipse cx="567" cy="476" rx="7.1" ry="5.5" fill="#0870b8" transform="rotate(-16 567 476)"></ellipse><ellipse cx="540" cy="455" rx="15.9" ry="3.0" fill="#0669b2" transform="rotate(10 540 455)"></ellipse><ellipse cx="699" cy="470" rx="11.3" ry="3.2" fill="#0870b8" transform="rotate(-25 699 470)"></ellipse><ellipse cx="507" cy="483" rx="8.6" ry="4.5" fill="#0b80c6" transform="rotate(-32 507 483)"></ellipse><ellipse cx="494" cy="473" rx="5.2" ry="4.8" fill="#0b7cc2" transform="rotate(-29 494 473)"></ellipse><ellipse cx="593" cy="487" rx="6.5" ry="4.9" fill="#0870b8" transform="rotate(-21 593 487)"></ellipse><ellipse cx="499" cy="471" rx="13.0" ry="3.8" fill="#0870b8" transform="rotate(-4 499 471)"></ellipse><ellipse cx="541" cy="461" rx="5.9" ry="3.2" fill="#0b80c6" transform="rotate(-33 541 461)"></ellipse><ellipse cx="623" cy="444" rx="14.1" ry="6.0" fill="#0669b2" transform="rotate(-12 623 444)"></ellipse><ellipse cx="682" cy="498" rx="6.4" ry="5.4" fill="#0b80c6" transform="rotate(-22 682 498)"></ellipse><ellipse cx="534" cy="492" rx="15.8" ry="6.3" fill="#0870b8" transform="rotate(-8 534 492)"></ellipse><ellipse cx="680" cy="461" rx="8.9" ry="4.6" fill="#0b80c6" transform="rotate(-34 680 461)"></ellipse><ellipse cx="605" cy="461" rx="13.0" ry="4.6" fill="#0b80c6" transform="rotate(-32 605 461)"></ellipse><ellipse cx="582" cy="480" rx="14.9" ry="6.7" fill="#0870b8" transform="rotate(1 582 480)"></ellipse><ellipse cx="678" cy="451" rx="12.5" ry="7.5" fill="#0b7cc2" transform="rotate(7 678 451)"></ellipse><ellipse cx="444" cy="475" rx="9.2" ry="3.1" fill="#0b80c6" transform="rotate(-31 444 475)"></ellipse><ellipse cx="606" cy="499" rx="14.7" ry="6.6" fill="#0b7cc2" transform="rotate(7 606 499)"></ellipse><ellipse cx="620" cy="459" rx="10.1" ry="5.7" fill="#0b80c6" transform="rotate(-21 620 459)"></ellipse><ellipse cx="643" cy="475" rx="10.3" ry="7.5" fill="#0669b2" transform="rotate(-21 643 475)"></ellipse><ellipse cx="616" cy="440" rx="6.9" ry="7.5" fill="#0b7cc2" transform="rotate(-13 616 440)"></ellipse></g>
<path d="M0.0,377.1 L3.5,377.2 L7.0,374.3 L10.5,375.8 L14.0,372.3 L17.2,375.8 L20.4,374.0 L23.6,377.4 L26.8,377.5 L30.0,378.3 L33.2,379.8 L36.3,379.9 L39.5,381.5 L42.7,379.2 L45.8,383.2 L49.0,383.3 L52.0,387.0 L55.0,389.5 L58.0,390.6 L61.0,390.0 L64.0,391.8 L67.0,389.4 L70.0,392.9 L73.3,393.8 L76.7,394.4 L80.0,395.5 L83.3,393.0 L86.7,397.2 L90.0,395.2 L93.3,398.5 L96.6,398.6 L99.9,399.5 L103.1,398.4 L106.4,400.5 L109.7,397.9 L113.0,398.7 L116.1,401.4 L119.2,400.1 L122.3,401.3 L125.4,399.4 L128.5,401.1 L131.6,398.8 L134.7,401.0 L137.8,398.5 L140.9,400.9 L144.0,397.9 L147.0,400.7 L150.1,398.5 L153.2,400.6 L156.3,399.4 L159.4,400.4 L162.5,397.5 L165.6,400.3 L168.7,399.3 L171.8,400.1 L174.9,398.0 L178.0,397.7 L181.1,399.9 L184.1,398.9 L187.2,399.8 L190.2,398.6 L193.3,399.7 L196.4,397.4 L199.4,399.6 L202.5,397.6 L205.5,399.5 L208.6,397.2 L211.6,399.4 L214.7,397.9 L217.8,399.2 L220.8,398.5 L223.9,399.1 L226.9,396.4 L230.0,398.1 L233.1,399.0 L236.3,396.3 L239.4,398.9 L242.6,396.1 L245.7,398.8 L248.9,395.4 L252.0,398.8 L255.1,398.3 L258.3,398.7 L261.4,398.3 L264.6,398.6 L267.7,396.8 L270.9,398.5 L274.0,396.3 L277.2,399.2 L280.4,398.6 L283.6,400.6 L286.8,401.0 L290.0,401.3 L293.7,403.3 L297.3,401.9 L301.0,405.1 L303.8,407.3 L306.7,406.2 L309.5,410.0 L312.3,408.8 L315.2,412.7 L318.0,412.2 L321.0,415.6 L324.0,417.1 L327.0,418.8 L330.0,419.6 L333.0,419.4 L336.1,423.3 L339.3,422.7 L342.4,425.9 L345.6,423.9 L348.7,428.4 L351.9,428.0 L355.0,427.6 L358.1,432.2 L361.3,432.9 L364.4,434.6 L367.6,433.0 L370.7,437.1 L373.9,435.9 L377.0,438.7 L380.0,441.2 L383.0,441.5 L386.0,444.6 L389.0,443.3 L392.0,446.7 L394.8,449.5 L397.6,449.5 L400.4,452.5 L403.2,453.3 L406.0,452.5 L408.7,457.0 L411.3,458.5 L414.0,460.0 L416.7,459.6 L419.3,463.0 L422.0,462.3 L424.7,466.0 L427.3,465.8 L430.0,466.2 L433.0,470.6 L436.0,471.1 L439.0,473.9 L442.0,474.5 L445.0,477.2 L448.0,475.5 L451.0,480.2 L454.2,481.2 L457.4,479.0 L460.7,482.7 L463.9,480.7 L467.1,484.1 L470.3,481.7 L473.6,485.6 L476.8,485.9 L480.0,486.2 L483.1,487.6 L486.2,486.9 L489.4,488.9 L492.5,489.2 L495.6,490.1 L498.8,489.7 L501.9,491.4 L505.0,488.7 L508.2,492.4 L511.4,489.6 L514.5,493.1 L517.7,492.6 L520.9,493.8 L524.1,491.7 L527.3,494.5 L530.5,494.9 L533.6,495.3 L536.8,493.9 L540.0,495.9 L543.3,496.3 L546.6,495.4 L549.9,496.9 L553.1,495.7 L556.4,497.4 L559.7,496.8 L563.0,494.9 L566.2,498.4 L569.3,498.1 L572.5,499.3 L575.6,496.7 L578.8,500.1 L581.9,499.1 L585.1,501.0 L588.2,501.3 L591.4,501.8 L594.5,500.4 L597.7,502.7 L600.8,500.7 L604.0,503.5 L604.0,504.0 L0.0,504.0 Z" fill="#00165c"></path>
<path d="M0.0,403.6 L4.0,410.6 L8.0,407.9 L12.0,411.8 L16.0,405.4 L20.0,406.7 L24.0,414.2 L28.0,411.8 L32.0,416.6 L36.0,413.1 L40.0,415.9 L42.5,421.8 L45.0,418.3 L47.5,427.2 L50.0,425.9 L51.7,434.0 L53.3,433.2 L55.0,436.7 L56.4,445.6 L57.8,446.1 L59.2,452.8 L60.6,452.5 L62.0,454.2 L63.9,463.6 L65.8,463.3 L67.7,470.9 L69.6,473.3 L73.2,475.2 L76.8,472.4 L80.4,476.8 L84.0,471.1 L85.2,474.0 L86.4,468.7 L87.6,467.0 L88.8,458.8 L90.0,453.3 L91.0,456.0 L92.0,445.9 L93.0,443.7 L97.2,447.0 L101.5,443.9 L105.8,445.0 L110.0,443.0 L113.6,443.6 L117.2,439.4 L120.8,442.8 L124.4,440.5 L128.0,438.5 L131.7,443.7 L135.3,442.5 L139.0,447.0 L142.7,447.9 L146.3,450.3 L150.0,452.0 L153.7,452.8 L157.3,451.0 L161.0,454.5 L164.7,451.6 L168.3,456.2 L172.0,456.7 L175.5,456.0 L179.0,448.6 L182.5,454.0 L186.0,449.2 L189.5,452.0 L193.0,444.1 L196.5,450.0 L200.0,448.1 L203.8,448.5 L207.5,447.3 L211.2,447.5 L215.0,445.8 L218.8,446.5 L222.5,439.5 L226.2,445.5 L230.0,441.8 L233.7,444.3 L237.4,437.2 L241.1,442.9 L244.8,436.6 L248.5,441.6 L252.2,438.0 L255.9,440.2 L259.6,437.8 L262.7,441.2 L265.8,439.4 L268.8,444.6 L271.9,443.9 L275.0,441.7 L278.5,449.5 L282.0,444.5 L285.5,452.5 L289.0,447.6 L292.6,454.8 L296.2,451.8 L299.9,456.2 L303.5,456.2 L307.1,457.8 L310.8,455.6 L314.4,459.2 L318.0,459.8 L321.6,461.4 L325.2,461.1 L328.9,464.4 L332.5,460.9 L336.1,467.2 L339.8,461.9 L343.4,470.2 L347.0,471.4 L350.0,473.9 L353.0,475.1 L356.0,478.4 L359.0,480.6 L362.0,481.0 L363.5,486.5 L365.0,484.9 L366.5,493.5 L368.0,495.3 L369.5,500.5 L371.0,504.0 L0.0,504.0 Z" fill="#06226a"></path>
<g fill="#00165c"><ellipse cx="91" cy="468" rx="4.2" ry="6.6" transform="rotate(8 91 468)"></ellipse><ellipse cx="32" cy="431" rx="6.3" ry="4.6" transform="rotate(-16 32 431)"></ellipse><ellipse cx="294" cy="463" rx="5.4" ry="3.9" transform="rotate(8 294 463)"></ellipse><ellipse cx="305" cy="467" rx="5.8" ry="7.0" transform="rotate(-26 305 467)"></ellipse><ellipse cx="268" cy="471" rx="3.9" ry="3.2" transform="rotate(22 268 471)"></ellipse><ellipse cx="171" cy="480" rx="6.5" ry="7.3" transform="rotate(25 171 480)"></ellipse><ellipse cx="144" cy="486" rx="4.5" ry="8.6" transform="rotate(23 144 486)"></ellipse><ellipse cx="43" cy="440" rx="3.5" ry="8.8" transform="rotate(-4 43 440)"></ellipse><ellipse cx="223" cy="451" rx="4.8" ry="5.3" transform="rotate(-9 223 451)"></ellipse><ellipse cx="209" cy="471" rx="6.6" ry="7.1" transform="rotate(26 209 471)"></ellipse><ellipse cx="301" cy="499" rx="5.5" ry="4.0" transform="rotate(22 301 499)"></ellipse><ellipse cx="338" cy="493" rx="5.1" ry="7.3" transform="rotate(-17 338 493)"></ellipse><ellipse cx="293" cy="470" rx="3.8" ry="3.4" transform="rotate(21 293 470)"></ellipse><ellipse cx="61" cy="451" rx="6.0" ry="8.2" transform="rotate(-27 61 451)"></ellipse><ellipse cx="310" cy="499" rx="4.8" ry="9.0" transform="rotate(-11 310 499)"></ellipse><ellipse cx="36" cy="472" rx="2.6" ry="4.2" transform="rotate(-6 36 472)"></ellipse><ellipse cx="24" cy="491" rx="3.9" ry="8.8" transform="rotate(24 24 491)"></ellipse><ellipse cx="138" cy="462" rx="4.8" ry="6.9" transform="rotate(6 138 462)"></ellipse><ellipse cx="200" cy="473" rx="6.7" ry="6.0" transform="rotate(-4 200 473)"></ellipse><ellipse cx="112" cy="498" rx="4.8" ry="6.3" transform="rotate(-29 112 498)"></ellipse><ellipse cx="151" cy="471" rx="2.6" ry="6.7" transform="rotate(8 151 471)"></ellipse><ellipse cx="30" cy="474" rx="4.6" ry="7.1" transform="rotate(-9 30 474)"></ellipse><ellipse cx="250" cy="482" rx="2.6" ry="3.4" transform="rotate(11 250 482)"></ellipse><ellipse cx="165" cy="471" rx="3.9" ry="5.2" transform="rotate(-11 165 471)"></ellipse><ellipse cx="136" cy="472" rx="3.9" ry="5.3" transform="rotate(16 136 472)"></ellipse><ellipse cx="19" cy="470" rx="5.8" ry="4.9" transform="rotate(-17 19 470)"></ellipse><ellipse cx="74" cy="460" rx="5.6" ry="3.6" transform="rotate(-11 74 460)"></ellipse><ellipse cx="123" cy="488" rx="4.5" ry="8.1" transform="rotate(-20 123 488)"></ellipse><ellipse cx="124" cy="476" rx="6.5" ry="5.7" transform="rotate(-16 124 476)"></ellipse><ellipse cx="51" cy="467" rx="3.4" ry="7.8" transform="rotate(20 51 467)"></ellipse><ellipse cx="72" cy="450" rx="6.1" ry="6.9" transform="rotate(18 72 450)"></ellipse><ellipse cx="127" cy="439" rx="3.8" ry="7.8" transform="rotate(-14 127 439)"></ellipse><ellipse cx="128" cy="459" rx="4.4" ry="5.5" transform="rotate(25 128 459)"></ellipse><ellipse cx="63" cy="430" rx="6.7" ry="8.3" transform="rotate(29 63 430)"></ellipse><ellipse cx="158" cy="497" rx="6.7" ry="4.3" transform="rotate(15 158 497)"></ellipse><ellipse cx="294" cy="476" rx="4.8" ry="4.7" transform="rotate(-10 294 476)"></ellipse><ellipse cx="87" cy="435" rx="5.1" ry="4.7" transform="rotate(19 87 435)"></ellipse><ellipse cx="25" cy="493" rx="5.6" ry="8.5" transform="rotate(24 25 493)"></ellipse><ellipse cx="316" cy="470" rx="2.6" ry="7.5" transform="rotate(-20 316 470)"></ellipse><ellipse cx="112" cy="476" rx="4.9" ry="5.5" transform="rotate(26 112 476)"></ellipse><ellipse cx="218" cy="454" rx="3.6" ry="8.2" transform="rotate(-1 218 454)"></ellipse><ellipse cx="77" cy="467" rx="6.2" ry="4.0" transform="rotate(18 77 467)"></ellipse><ellipse cx="323" cy="486" rx="6.2" ry="3.0" transform="rotate(8 323 486)"></ellipse><ellipse cx="102" cy="449" rx="4.9" ry="5.5" transform="rotate(-2 102 449)"></ellipse><ellipse cx="29" cy="439" rx="3.1" ry="3.4" transform="rotate(28 29 439)"></ellipse><ellipse cx="181" cy="452" rx="3.9" ry="5.1" transform="rotate(9 181 452)"></ellipse><ellipse cx="209" cy="455" rx="3.4" ry="5.0" transform="rotate(-23 209 455)"></ellipse><ellipse cx="199" cy="480" rx="4.2" ry="3.5" transform="rotate(-19 199 480)"></ellipse><ellipse cx="137" cy="472" rx="6.0" ry="5.3" transform="rotate(18 137 472)"></ellipse><ellipse cx="222" cy="460" rx="4.2" ry="6.0" transform="rotate(12 222 460)"></ellipse><ellipse cx="153" cy="479" rx="4.6" ry="4.5" transform="rotate(2 153 479)"></ellipse><ellipse cx="154" cy="460" rx="6.5" ry="8.6" transform="rotate(-8 154 460)"></ellipse><ellipse cx="315" cy="485" rx="3.7" ry="5.8" transform="rotate(-23 315 485)"></ellipse><ellipse cx="286" cy="476" rx="6.5" ry="7.8" transform="rotate(10 286 476)"></ellipse><ellipse cx="259" cy="469" rx="3.0" ry="6.5" transform="rotate(-30 259 469)"></ellipse><ellipse cx="59" cy="484" rx="2.7" ry="3.6" transform="rotate(-24 59 484)"></ellipse></g>
</symbol></svg>
<div class="a" style="left:172.5px;top:322px;width:1px;height:664px;background:#c8c8c8"></div>
<div class="a" style="left:172.5px;top:985px;width:951px;height:1px;background:#c8c8c8"></div>
<span class="t" style="left:21px;top:344.82px;font-size:21px;color:#c43e1c">1</span>
<div class="a" style="left:51px;top:345px;width:92px;height:55.5px;border-radius:7px;background:#b7472a;box-shadow:0 1px 2px rgba(0,0,0,.25)"></div>
<div class="a" style="left:55px;top:349px;width:84.2px;height:47.6px;border-radius:3px;overflow:hidden;background:#fff;box-shadow:0 0 0 .6px #fff"><svg style="left:0;top:0" width="84.2" height="47.6"><use href="#pic" width="84.2" height="47.6"></use></svg></div>
<div class="a" style="left:189px;top:399px;width:895px;height:504.5px;background:#d9d9d9"></div>
<svg style="left:189.5px;top:399.5px" width="894" height="503.5"><use href="#pic" width="894" height="503.5"></use></svg>
<svg style="left:299px;top:480px" width="676" height="310" viewBox="299 480 676 310" fill="none" shape-rendering="crispEdges">
<rect x="300.5" y="481.5" width="672" height="176" stroke="#fff" stroke-width="1"></rect><rect x="300.5" y="481.5" width="672" height="176" stroke="#595959" stroke-width="1" stroke-dasharray="1.6 1.4"></rect>
<rect x="300.5" y="662.5" width="672" height="125" stroke="#fff" stroke-width="1"></rect><rect x="300.5" y="662.5" width="672" height="125" stroke="#595959" stroke-width="1" stroke-dasharray="1.6 1.4"></rect>
</svg>

<span class="t" style="left: 457.5px; top: 598.99px; font-size: 47.5px; color: rgb(0, 0, 0); -webkit-text-stroke: 0.7px rgb(0, 0, 0); filter: url(&quot;#thin&quot;); letter-spacing: 1.372px;">Click to add title</span>
<span class="t" style="left: 548px; top: 669.09px; font-size: 18.2px; color: rgb(17, 17, 17); letter-spacing: 0.919px;">Click to add subtitle</span>
<!--MAIN1-->

<!-- ============ PANE ============ -->
<!--PANE0-->
<div class="a" style="left:1123px;top:322px;width:1px;height:664px;background:#c6c6c6"></div>
<span class="t" style="left: 1140px; top: 336.67px; font-size: 33px; color: rgb(28, 28, 42); letter-spacing: -1.224px;">Format Background</span>
<svg style="left:1447px;top:345.4px" width="21" height="13" viewBox="0 0 21 13" fill="none" stroke="#222" stroke-width="1.5"><path d="M.8 1L10.4 11L20 1"></path></svg>
<svg style="left:1511.4px;top:343.2px" width="16" height="16" viewBox="0 0 16 16" fill="none" stroke="#222" stroke-width="1.5"><path d="M.7.7L14.900 14.900M14.900.7L.7 14.900"></path></svg>
<div class="box" style="left:1143px;top:386px;width:46px;height:46px;border-color:#5e5e5e;border-radius:6.5px"></div>
<svg style="left:1146px;top:388px" width="40" height="40" viewBox="1146 388 40 40" fill="none" stroke="#d04423" stroke-width="1.4" stroke-linejoin="round">
<path d="M1150.6 410.1L1164.8 395.6L1178 409.5L1163.5 423.2Z"></path>
<path d="M1158.6 401.4V396a3.1 3.1 0 0 1 6.2-1V404"></path>
<circle cx="1164.5" cy="404.7" r="1.9" fill="#d04423" stroke="none"></circle>
<path d="M1165.2 395.6c6 4.600 13.500 5 15.800 9.500c2 5-.6 12-3.600 18.600c.8-6.400.4-10.700-1-13.800Z" fill="#d04423" stroke="none"></path>
</svg>
<svg style="left:1204px;top:388px" width="36" height="42" viewBox="1204 388 36 42" fill="none">
<defs><linearGradient id="refl" x1="0" y1="0" x2="0" y2="1"><stop offset="0" stop-color="#fff"></stop><stop offset="1" stop-color="#f0f0f0"></stop></linearGradient></defs>
<path d="M1213 420.600H1230.500L1233 427H1210.600Z" fill="url(#refl)"></path>
<path d="M1213 420.400L1211 426M1230.500 420.400L1232.500 426" stroke="#aaa" stroke-width="1"></path>
<path d="M1221.700 392L1236.300 402.800L1230.500 419.800H1213L1207.400 402.800Z" fill="#fff" stroke="#5a5a5a" stroke-width="1.2" stroke-linejoin="round"></path>
<path d="M1212.600 420H1231" stroke="#555" stroke-width="2"></path>
</svg>
<svg style="left:1262px;top:393px" width="32" height="32" viewBox="0 0 32 32">
<rect x=".6" y=".6" width="30.800" height="30.800" fill="#fff" stroke="#6a6a6a" stroke-width="1.2"></rect>
<path d="M2.200 29.800V21L10.800 13.800L27 29.800Z" fill="#737373"></path><path d="M18.500 18.500L21.800 15.800L29.800 23V29.800H28.800Z" fill="#737373"></path>
<circle cx="24.500" cy="7.500" r="3.500" fill="#737373"></circle></svg>
<svg style="left:1138px;top:440px" width="398" height="16" viewBox="1138 440 398 16" fill="none" stroke="#c6c6c6" stroke-width="1.4"><path d="M1140 454H1152L1162 441.800L1172.500 454H1534"></path></svg>
<div class="a" style="left:1508.500px;top:461px;width:25.500px;height:457px;background:#f4f4f4;border-radius:12px"></div>
<div class="a" style="left:1180px;top:461px;width:330px;height:35px;overflow:hidden">
<div class="box" style="left:7px;top:-6px;width:80px;height:37.500px;border-radius:6px"></div>
<div class="box" style="left:101px;top:-6px;width:101.500px;height:37.500px;border-radius:6px;background:#f2f2f2;border-color:#dcdcdc"></div>
</div>
<span class="t" style="left: 1199.5px; top: 468.19px; font-size: 17.5px; letter-spacing: -0.318px;">Inse<u>r</u>t...</span>
<span class="t" style="left: 1293px; top: 468.19px; font-size: 17.5px; color: rgb(180, 180, 180); letter-spacing: 0.286px;"><u>C</u>lipboard</span>
<span class="t" style="left: 1187px; top: 515.59px; font-size: 17.5px; letter-spacing: -0.272px;">Text<u>u</u>re</span>
<div class="box" style="left:1438px;top:502px;width:66px;height:41px;border-radius:6px"></div>
<svg style="left:1452px;top:510px" width="24" height="24" viewBox="0 0 24 24"><rect x=".7" y=".7" width="22.600" height="22.600" fill="#fff" stroke="#333" stroke-width="1.4"></rect>
<g fill="#1e88d2"><rect x="3" y="3" width="3" height="3"></rect><rect x="7.200" y="3" width="3.400" height="3.400"></rect><rect x="12.400" y="3.400" width="1.800" height="1.800"></rect><rect x="3" y="7.400" width="3.200" height="3.200"></rect><rect x="7.600" y="7.600" width="1.600" height="1.600"></rect><rect x="3.200" y="12" width="1.600" height="1.600"></rect><rect x="18.800" y="7.600" width="1.800" height="1.800"></rect><rect x="16.400" y="10.600" width="2.200" height="2.200"></rect><rect x="19" y="10.800" width="1.600" height="1.600"></rect><rect x="13.200" y="13.400" width="3.600" height="3.600"></rect><rect x="17.800" y="13.800" width="3" height="3"></rect><rect x="9.200" y="18" width="3" height="3"></rect><rect x="13.400" y="18" width="3.200" height="3.200"></rect><rect x="17.800" y="18" width="3" height="3"></rect><rect x="6.200" y="19.200" width="1.600" height="1.600"></rect></g></svg>
<svg style="left:1485.7px;top:519.2px" width="10" height="7" viewBox="0 0 10 7" fill="none" stroke="#222" stroke-width="1.5"><path d="M.8 1L5 5.2L9.2 1"></path></svg>
<span class="t" style="left: 1187px; top: 559.59px; font-size: 17.5px; letter-spacing: -0.197px;"><u>T</u>ransparency</span>
<div class="a" style="left:1305px;top:559px;width:4px;height:14px;background:#5e5e5e;border-radius:1px"></div>
<div class="a" style="left:1309px;top:565px;width:76px;height:1.400px;background:#5e5e5e"></div>
<div class="box" style="left:1397px;top:552.3px;width:107px;height:30.5px"></div><span class="t" style="left: 1406.5px; top: 559.6px; font-size: 15px; color: rgb(51, 51, 51); letter-spacing: 0.156px;">0%</span><svg style="left:1485.8px;top:557.0999999999999px" width="9" height="20" viewBox="0 0 9 20" fill="none" stroke="#444" stroke-width="1.2"><path d="M.8 4.6L4.4 1L8 4.6M.8 15.2L4.4 18.8L8 15.2"></path></svg>
<svg style="left:1099px;top:589px" width="90" height="28" viewBox="1099 589 90 28" fill="none" stroke="#000" stroke-width="3.900"><circle cx="1114" cy="603.200" r="10.800" fill="#f0f0f0"></circle><path d="M1125.500 603.300H1166" stroke-width="4"></path><path d="M1183.200 603.300L1159.500 595.500L1164.200 603.300L1159.500 611.400Z" fill="#000" stroke="none"></path></svg>
<div class="a" style="left:1187px;top:594px;width:20px;height:20px;background:#c43e1c;border-radius:3.500px"></div>
<svg style="left:1187px;top:594px" width="20" height="20" viewBox="0 0 20 20" fill="none" stroke="#fff" stroke-width="1.800"><path d="M5 10.200L8.600 13.800L15.400 6.600"></path></svg>
<span class="t" style="left: 1215.8px; top: 597.19px; font-size: 17.5px; letter-spacing: -0.029px;">T<u>i</u>le picture as texture</span>
<div class="a" style="left:1185px;top:623.500px;width:327.500px;height:252px;border:4px solid #000;border-radius:5px"></div>
<span class="t" style="left: 1202px; top: 640.79px; font-size: 17.5px; letter-spacing: 0.26px;"><u>O</u>ffset X</span>
<span class="t" style="left: 1202px; top: 680.59px; font-size: 17.5px; letter-spacing: 0.236px;">Offs<u>e</u>t Y</span>
<span class="t" style="left: 1202px; top: 720.89px; font-size: 17.5px; letter-spacing: -0.618px;">Scale <u>X</u></span>
<span class="t" style="left: 1202px; top: 760.99px; font-size: 17.5px; letter-spacing: -0.717px;">Scale <u>Y</u></span>
<span class="t" style="left: 1202px; top: 801.99px; font-size: 17.5px; letter-spacing: 0.462px;">A<u>l</u>ignment</span>
<span class="t" style="left: 1202px; top: 843.99px; font-size: 17.5px; letter-spacing: 0.534px;"><u>M</u>irror type</span>
<div class="box" style="left:1397px;top:632.3px;width:107px;height:30.5px"></div><span class="t" style="left: 1406.5px; top: 639.6px; font-size: 15px; color: rgb(51, 51, 51); letter-spacing: 0.367px;">0 pt</span><svg style="left:1485.8px;top:637.0999999999999px" width="9" height="20" viewBox="0 0 9 20" fill="none" stroke="#444" stroke-width="1.2"><path d="M.8 4.6L4.4 1L8 4.6M.8 15.2L4.4 18.8L8 15.2"></path></svg><div class="box" style="left:1397px;top:672.3px;width:107px;height:30.5px"></div><span class="t" style="left: 1406.5px; top: 679.6px; font-size: 15px; color: rgb(51, 51, 51); letter-spacing: 0.367px;">0 pt</span><svg style="left:1485.8px;top:677.0999999999999px" width="9" height="20" viewBox="0 0 9 20" fill="none" stroke="#444" stroke-width="1.2"><path d="M.8 4.6L4.4 1L8 4.6M.8 15.2L4.4 18.8L8 15.2"></path></svg><div class="box" style="left:1397px;top:712.3px;width:107px;height:30.5px"></div><span class="t" style="left: 1406.5px; top: 719.6px; font-size: 15px; color: rgb(51, 51, 51); letter-spacing: 0.281px;">100%</span><svg style="left:1485.8px;top:717.0999999999999px" width="9" height="20" viewBox="0 0 9 20" fill="none" stroke="#444" stroke-width="1.2"><path d="M.8 4.6L4.4 1L8 4.6M.8 15.2L4.4 18.8L8 15.2"></path></svg><div class="box" style="left:1397px;top:752.3px;width:107px;height:30.5px"></div><span class="t" style="left: 1406.5px; top: 759.6px; font-size: 15px; color: rgb(51, 51, 51); letter-spacing: 0.281px;">100%</span><svg style="left:1485.8px;top:757.0999999999999px" width="9" height="20" viewBox="0 0 9 20" fill="none" stroke="#444" stroke-width="1.2"><path d="M.8 4.6L4.4 1L8 4.6M.8 15.2L4.4 18.8L8 15.2"></path></svg>
<div class="box" style="left:1363.500px;top:792.500px;width:140.500px;height:32.500px;border-radius:6px"></div>
<span class="t" style="left: 1371.8px; top: 801.99px; font-size: 17.5px; letter-spacing: 0.258px;">Top left</span>
<svg style="left:1487.5px;top:805.5px" width="10" height="7" viewBox="0 0 10 7" fill="none" stroke="#222" stroke-width="1.5"><path d="M.8 1L5 5.2L9.2 1"></path></svg>
<div class="box" style="left:1383.500px;top:834.500px;width:120.500px;height:32.500px;border-radius:6px"></div>
<span class="t" style="left: 1391.8px; top: 843.99px; font-size: 17.5px; letter-spacing: 0.164px;">None</span>
<svg style="left:1487.5px;top:847.5px" width="10" height="7" viewBox="0 0 10 7" fill="none" stroke="#222" stroke-width="1.5"><path d="M.8 1L5 5.2L9.2 1"></path></svg>
<div class="box" style="left:1187px;top:878.600px;width:20px;height:19.400px;border-radius:3.500px;background:#f3f3f3;border-color:#cdcdcd"></div>
<span class="t" style="left: 1215.8px; top: 880.69px; font-size: 17.5px; color: rgb(180, 180, 180); letter-spacing: 0.052px;">Rotate <u>w</u>ith shape</span>
<svg style="left:1514px;top:468.500px" width="14" height="11" viewBox="0 0 14 11"><path d="M7 1.600L12.800 9.600H1.200Z" fill="#767676" stroke="#767676" stroke-width="1.800" stroke-linejoin="round"></path></svg>
<svg style="left:1514px;top:900.500px" width="14" height="11" viewBox="0 0 14 11"><path d="M7 9.400L12.800 1.400H1.200Z" fill="#767676" stroke="#767676" stroke-width="1.800" stroke-linejoin="round"></path></svg>
<div class="a" style="left:1516px;top:643px;width:11px;height:249.500px;background:#767676;border-radius:5.500px"></div>
<div class="box" style="left:1140px;top:927.800px;width:118px;height:36px;border-radius:6px"></div>
<span class="t" style="left: 1152.5px; top: 939.29px; font-size: 17.5px; letter-spacing: 0.617px;">App<u>l</u>y to All</span>
<div class="box" style="left:1272px;top:927.800px;width:166px;height:36px;border-radius:6px"></div>
<span class="t" style="left: 1284.7px; top: 939.29px; font-size: 17.5px; letter-spacing: -0.188px;">Reset <u>B</u>ackground</span>
<!--PANE1-->

<!-- ============ STATUS ============ -->
<!--ST0-->
<div class="a" style="left:2px;top:987.500px;width:1549px;height:32px;background:#f3f3f3;border-top:1px solid #d2d2d2"></div>
<div class="a" style="left:0;top:1019.500px;width:1553px;height:4px;background:#0a0a0a"></div>
<div class="a" style="left:0;top:1019.500px;width:237px;height:4px;background:#c8c8c8"></div>
<div class="a" style="left:541px;top:1019.500px;width:70px;height:4px;background:#3c3c3c"></div>
<span class="t" style="left: 12px; top: 997.96px; font-size: 16px; color: rgb(51, 51, 51); letter-spacing: -0.172px;">Slide 1 of 1</span>
<svg style="left:117px;top:994px" width="24" height="20" viewBox="117 994 24 20" fill="none" stroke="#333" stroke-width="1.300" stroke-linejoin="round"><path d="M127 996.600C124.500 995 121.500 995 118.600 996V1011H126.500M127 996.600C129.500 995 132.500 995 135.400 996V1006M127 996.600V1008"></path><path d="M129.500 1009L132.600 1012.200L138.600 1005.600" stroke-width="1.500"></path></svg>
<span class="t" style="left: 164px; top: 997.96px; font-size: 16px; color: rgb(51, 51, 51); letter-spacing: -0.163px;">English (Nigeria)</span>
<svg style="left:300px;top:992px" width="26" height="24" viewBox="300 992 26 24" fill="none" stroke="#333" stroke-width="1.300" stroke-linecap="round" stroke-linejoin="round"><circle cx="312" cy="996.800" r="2.300"></circle><path d="M302.600 998.600C306 1001 309 1001.400 312 1001.400S318 1001 321.400 998.600M308.800 1001.400V1006L305.600 1013.400M315.200 1001.400V1005"></path><path d="M312.500 1009.500L315.800 1012.800L322.800 1005.600" stroke-width="1.500"></path></svg>
<span class="t" style="left: 329px; top: 997.96px; font-size: 16px; color: rgb(51, 51, 51); letter-spacing: -0.228px;">Accessibility: Good to go</span>
<div class="a" style="left:1002.500px;top:988.500px;width:59.500px;height:31px;background:#dcdcdc"></div>
<svg style="left:1020px;top:994px" width="24" height="20" viewBox="1020 994 24 20" fill="none" stroke="#333" stroke-width="1.300"><path d="M1022 995.200H1042.200V1012.800H1022ZM1026.200 995.200V1012.800"></path><rect x="1029.400" y="998.400" width="9.600" height="6.200"></rect><path d="M1029.400 1008.600H1039"></path></svg>
<svg style="left:1080px;top:994px" width="24" height="20" viewBox="1080 994 24 20" fill="none" stroke="#333" stroke-width="1.300"><rect x="1081.600" y="995.600" width="8.200" height="6.400"></rect><rect x="1093.600" y="995.600" width="8.200" height="6.400"></rect><rect x="1081.600" y="1006" width="8.200" height="6.400"></rect><rect x="1093.600" y="1006" width="8.200" height="6.400"></rect></svg>
<svg style="left:1139px;top:993px" width="24" height="22" viewBox="1139 993 24 22" fill="none" stroke="#333" stroke-width="1.300" stroke-linejoin="round"><path d="M1151 996.800C1148 995 1144.500 995 1141.400 996V1011.600C1144.500 1010.800 1148 1011 1151 1013C1154 1011 1157.500 1010.800 1160.600 1011.600V996C1157.500 995 1154 995 1151 996.800ZM1151 996.800V1013"></path><path d="M1143.600 999.600H1148.600M1143.600 1002.800H1148.600M1143.600 1006H1148.600M1153.400 999.600H1158.400M1153.400 1002.800H1158.400M1153.400 1006H1158.400" stroke-width="1"></path></svg>
<svg style="left:1199px;top:993px" width="24" height="22" viewBox="1199 993 24 22" fill="none" stroke="#333" stroke-width="1.300"><path d="M1201.400 995.400H1220.800M1203 995.400V1005.600H1219.200V995.400M1211.100 1005.600V1012.600M1205.600 1012.800H1216.600"></path></svg>
<div class="a" style="left:1250.500px;top:1003.500px;width:11px;height:1.300px;background:#444"></div>
<div class="a" style="left:1270px;top:1003.400px;width:147px;height:1.500px;background:#555"></div>
<div class="a" style="left:1343.500px;top:1000px;width:1.300px;height:8px;background:#555"></div>
<div class="a" style="left:1299px;top:995.500px;width:7.500px;height:17.500px;background:#5e5e5e;border-radius:1px"></div>
<svg style="left:1425px;top:998px" width="13" height="13" viewBox="0 0 13 13" stroke="#444" stroke-width="1.300"><path d="M0 6.200H12.400M6.200 0V12.400"></path></svg>
<span class="t" style="left: 1456px; top: 997.96px; font-size: 16px; color: rgb(51, 51, 51); letter-spacing: -0.177px;">47%</span>
<svg style="left:1504px;top:992px" width="26" height="24" viewBox="1504 992 26 24" fill="none" stroke="#333" stroke-width="1.300"><rect x="1511.400" y="998.600" width="10" height="10.400"></rect><path d="M1513.200 995.800L1516.400 992.800L1519.600 995.800M1513.200 1011.800L1516.400 1014.800L1519.600 1011.800M1508.400 1000.400L1505.400 1003.800L1508.400 1007.200M1524.400 1000.400L1527.400 1003.800L1524.400 1007.200"></path></svg>
<!--ST1-->

</div>
</body></html>
